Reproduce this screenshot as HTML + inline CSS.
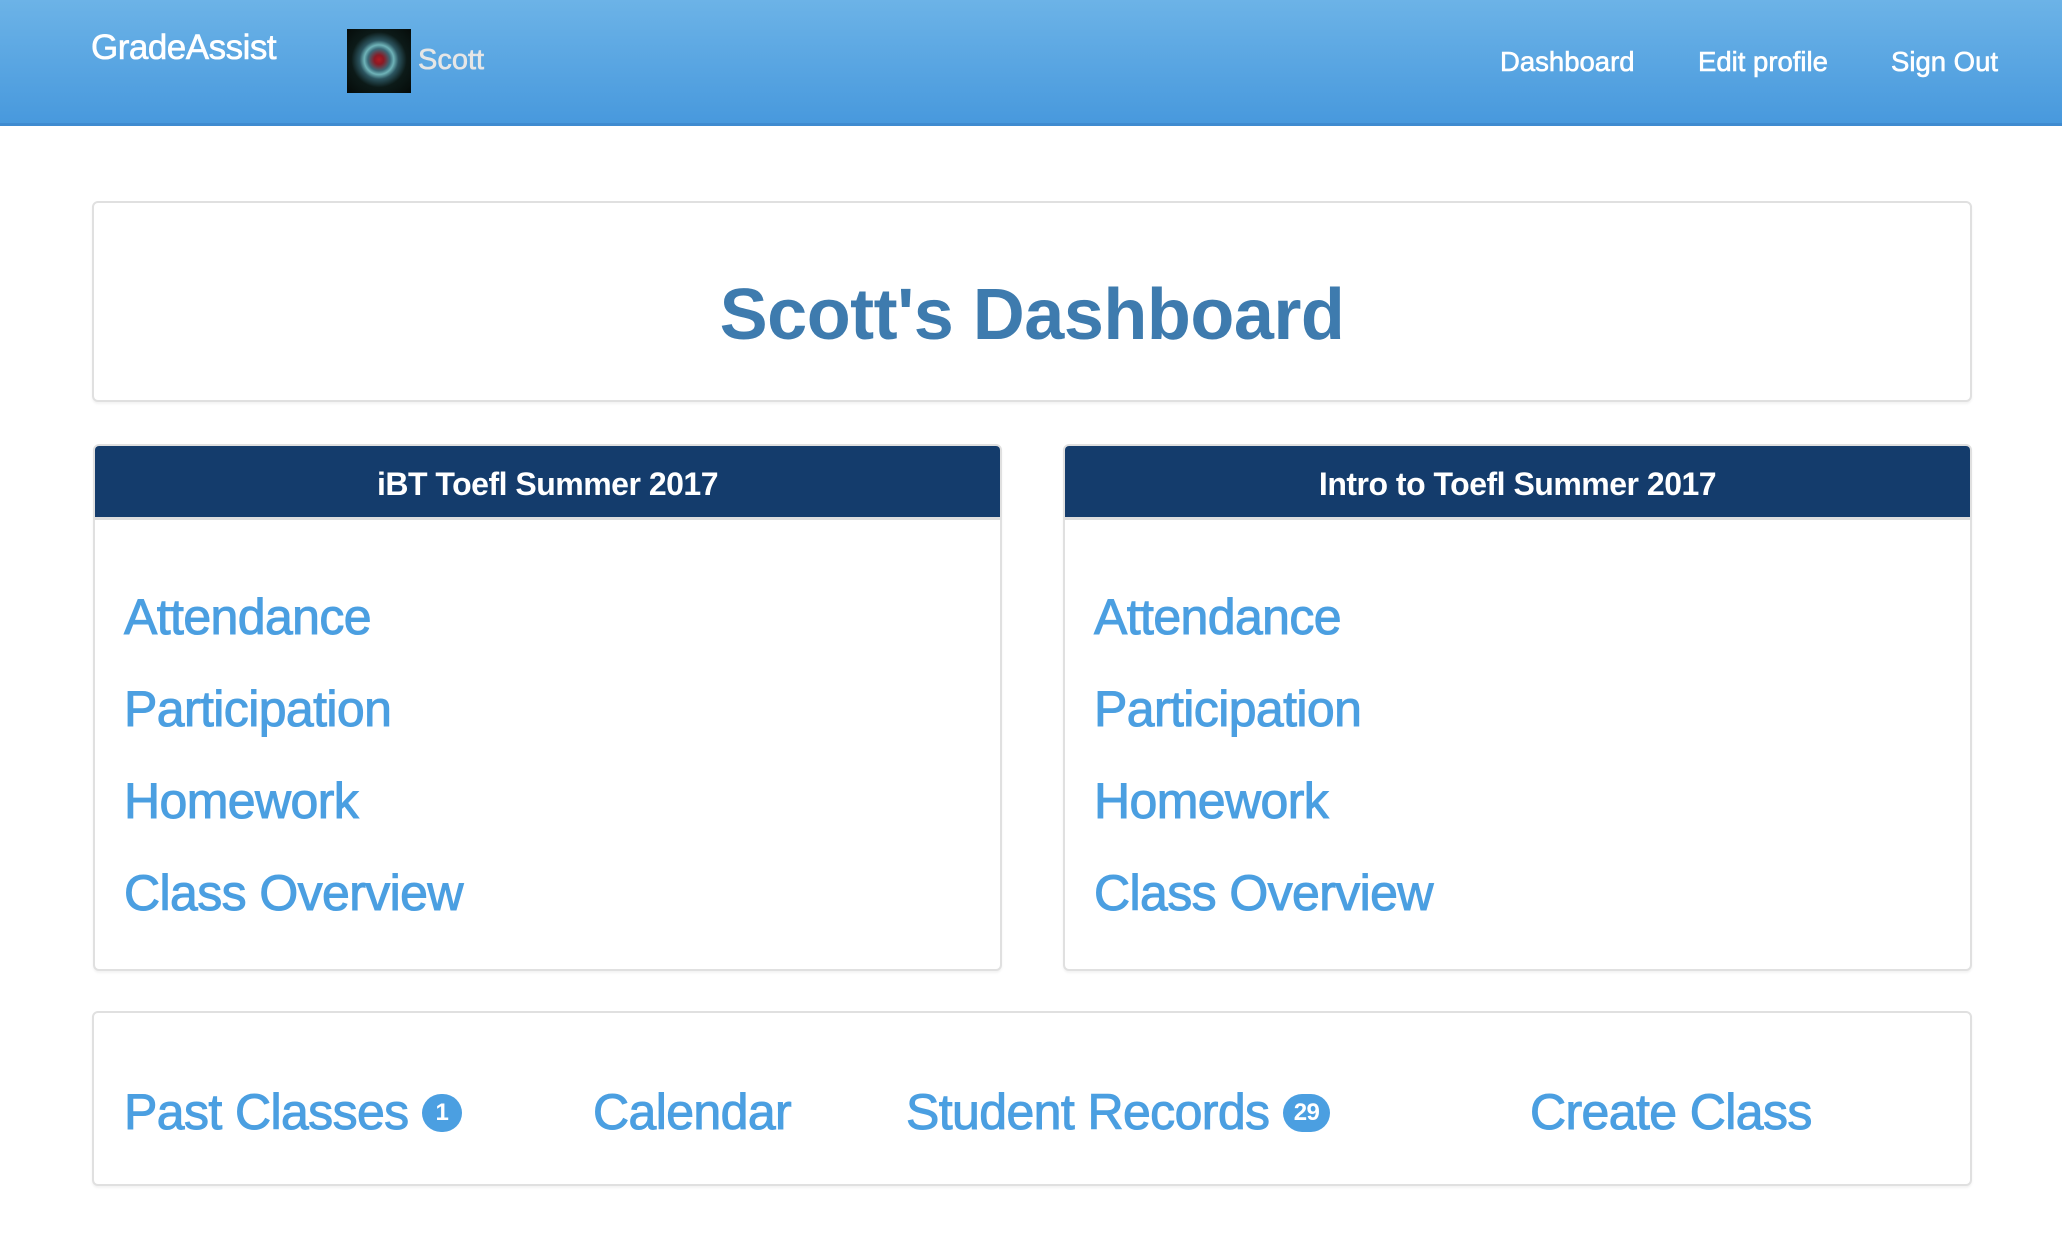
<!DOCTYPE html>
<html><head><meta charset="utf-8"><style>
*{box-sizing:border-box;margin:0;padding:0}
body{width:2062px;height:1258px;background:#fff;font-family:"Liberation Sans",Arial,sans-serif;position:relative;overflow:hidden}
.nav{position:absolute;left:0;top:0;width:2062px;height:126px;background:linear-gradient(#6cb3e7,#4899dd);border-bottom:3px solid #3f8bd0}
.nav .t{position:absolute;color:#fff;white-space:nowrap;-webkit-text-stroke:0.6px currentColor}
.box{position:absolute;border:2px solid #e0e0e0;border-radius:6px;background:#fff;box-shadow:0 2px 2px rgba(0,0,0,.05)}
a{color:#4b9fe1;text-decoration:none;position:absolute;white-space:nowrap;font-size:50px;letter-spacing:-0.6px;-webkit-text-stroke:1px #4b9fe1}
.ph{position:absolute;left:0;right:0;top:0;height:74px;background:#143c6c;color:#fff;font-weight:bold;font-size:32px;text-align:center;line-height:76px;border-radius:4px 4px 0 0;border-bottom:3px solid #ddd;letter-spacing:-0.5px}
.badge{display:inline-block;background:#4b9fe1;color:#fff;font-size:24px;font-weight:bold;border-radius:20px;height:38px;min-width:40px;line-height:38px;text-align:center;vertical-align:middle;position:relative;top:-3px;padding:0 11px;-webkit-text-stroke:0}
</style></head><body>
<div class="nav">
 <div class="t" style="left:91px;top:28px;font-size:35px;letter-spacing:-0.5px">GradeAssist</div>
 <div style="position:absolute;left:347px;top:29px;width:64px;height:64px;background:radial-gradient(circle at 50% 48%,#b01a22 0,#8a1a24 10%,#3a6a78 24%,#6fb3b8 32%,#2c5560 42%,#0c1a18 60%,#050a08 100%)"></div>
 <div class="t" style="left:418px;top:44px;font-size:29px;color:#e6e6e6">Scott</div>
 <div class="t" style="left:1500px;top:46px;font-size:27.5px">Dashboard</div>
 <div class="t" style="left:1698px;top:46px;font-size:27.5px">Edit profile</div>
 <div class="t" style="left:1891px;top:46px;font-size:27.5px">Sign Out</div>
</div>
<div class="box" style="left:92px;top:201px;width:1880px;height:201px">
 <div style="position:absolute;left:0;right:0;top:71px;text-align:center;font-size:72px;font-weight:bold;color:#3e7bae;letter-spacing:-0.5px">Scott's Dashboard</div>
</div>
<div class="box" style="left:93px;top:444px;width:909px;height:527px">
 <div class="ph">iBT Toefl Summer 2017</div>
 <a style="left:29px;top:142px">Attendance</a>
 <a style="left:29px;top:234px">Participation</a>
 <a style="left:29px;top:326px">Homework</a>
 <a style="left:29px;top:418px">Class Overview</a>
</div>
<div class="box" style="left:1063px;top:444px;width:909px;height:527px">
 <div class="ph">Intro to Toefl Summer 2017</div>
 <a style="left:29px;top:142px">Attendance</a>
 <a style="left:29px;top:234px">Participation</a>
 <a style="left:29px;top:326px">Homework</a>
 <a style="left:29px;top:418px">Class Overview</a>
</div>
<div class="box" style="left:92px;top:1011px;width:1880px;height:175px">
 <a style="left:30px;top:70px">Past Classes <span class="badge">1</span></a>
 <a style="left:499px;top:70px">Calendar</a>
 <a style="left:812px;top:70px">Student Records <span class="badge">29</span></a>
 <a style="left:1436px;top:70px">Create Class</a>
</div>
</body></html>
